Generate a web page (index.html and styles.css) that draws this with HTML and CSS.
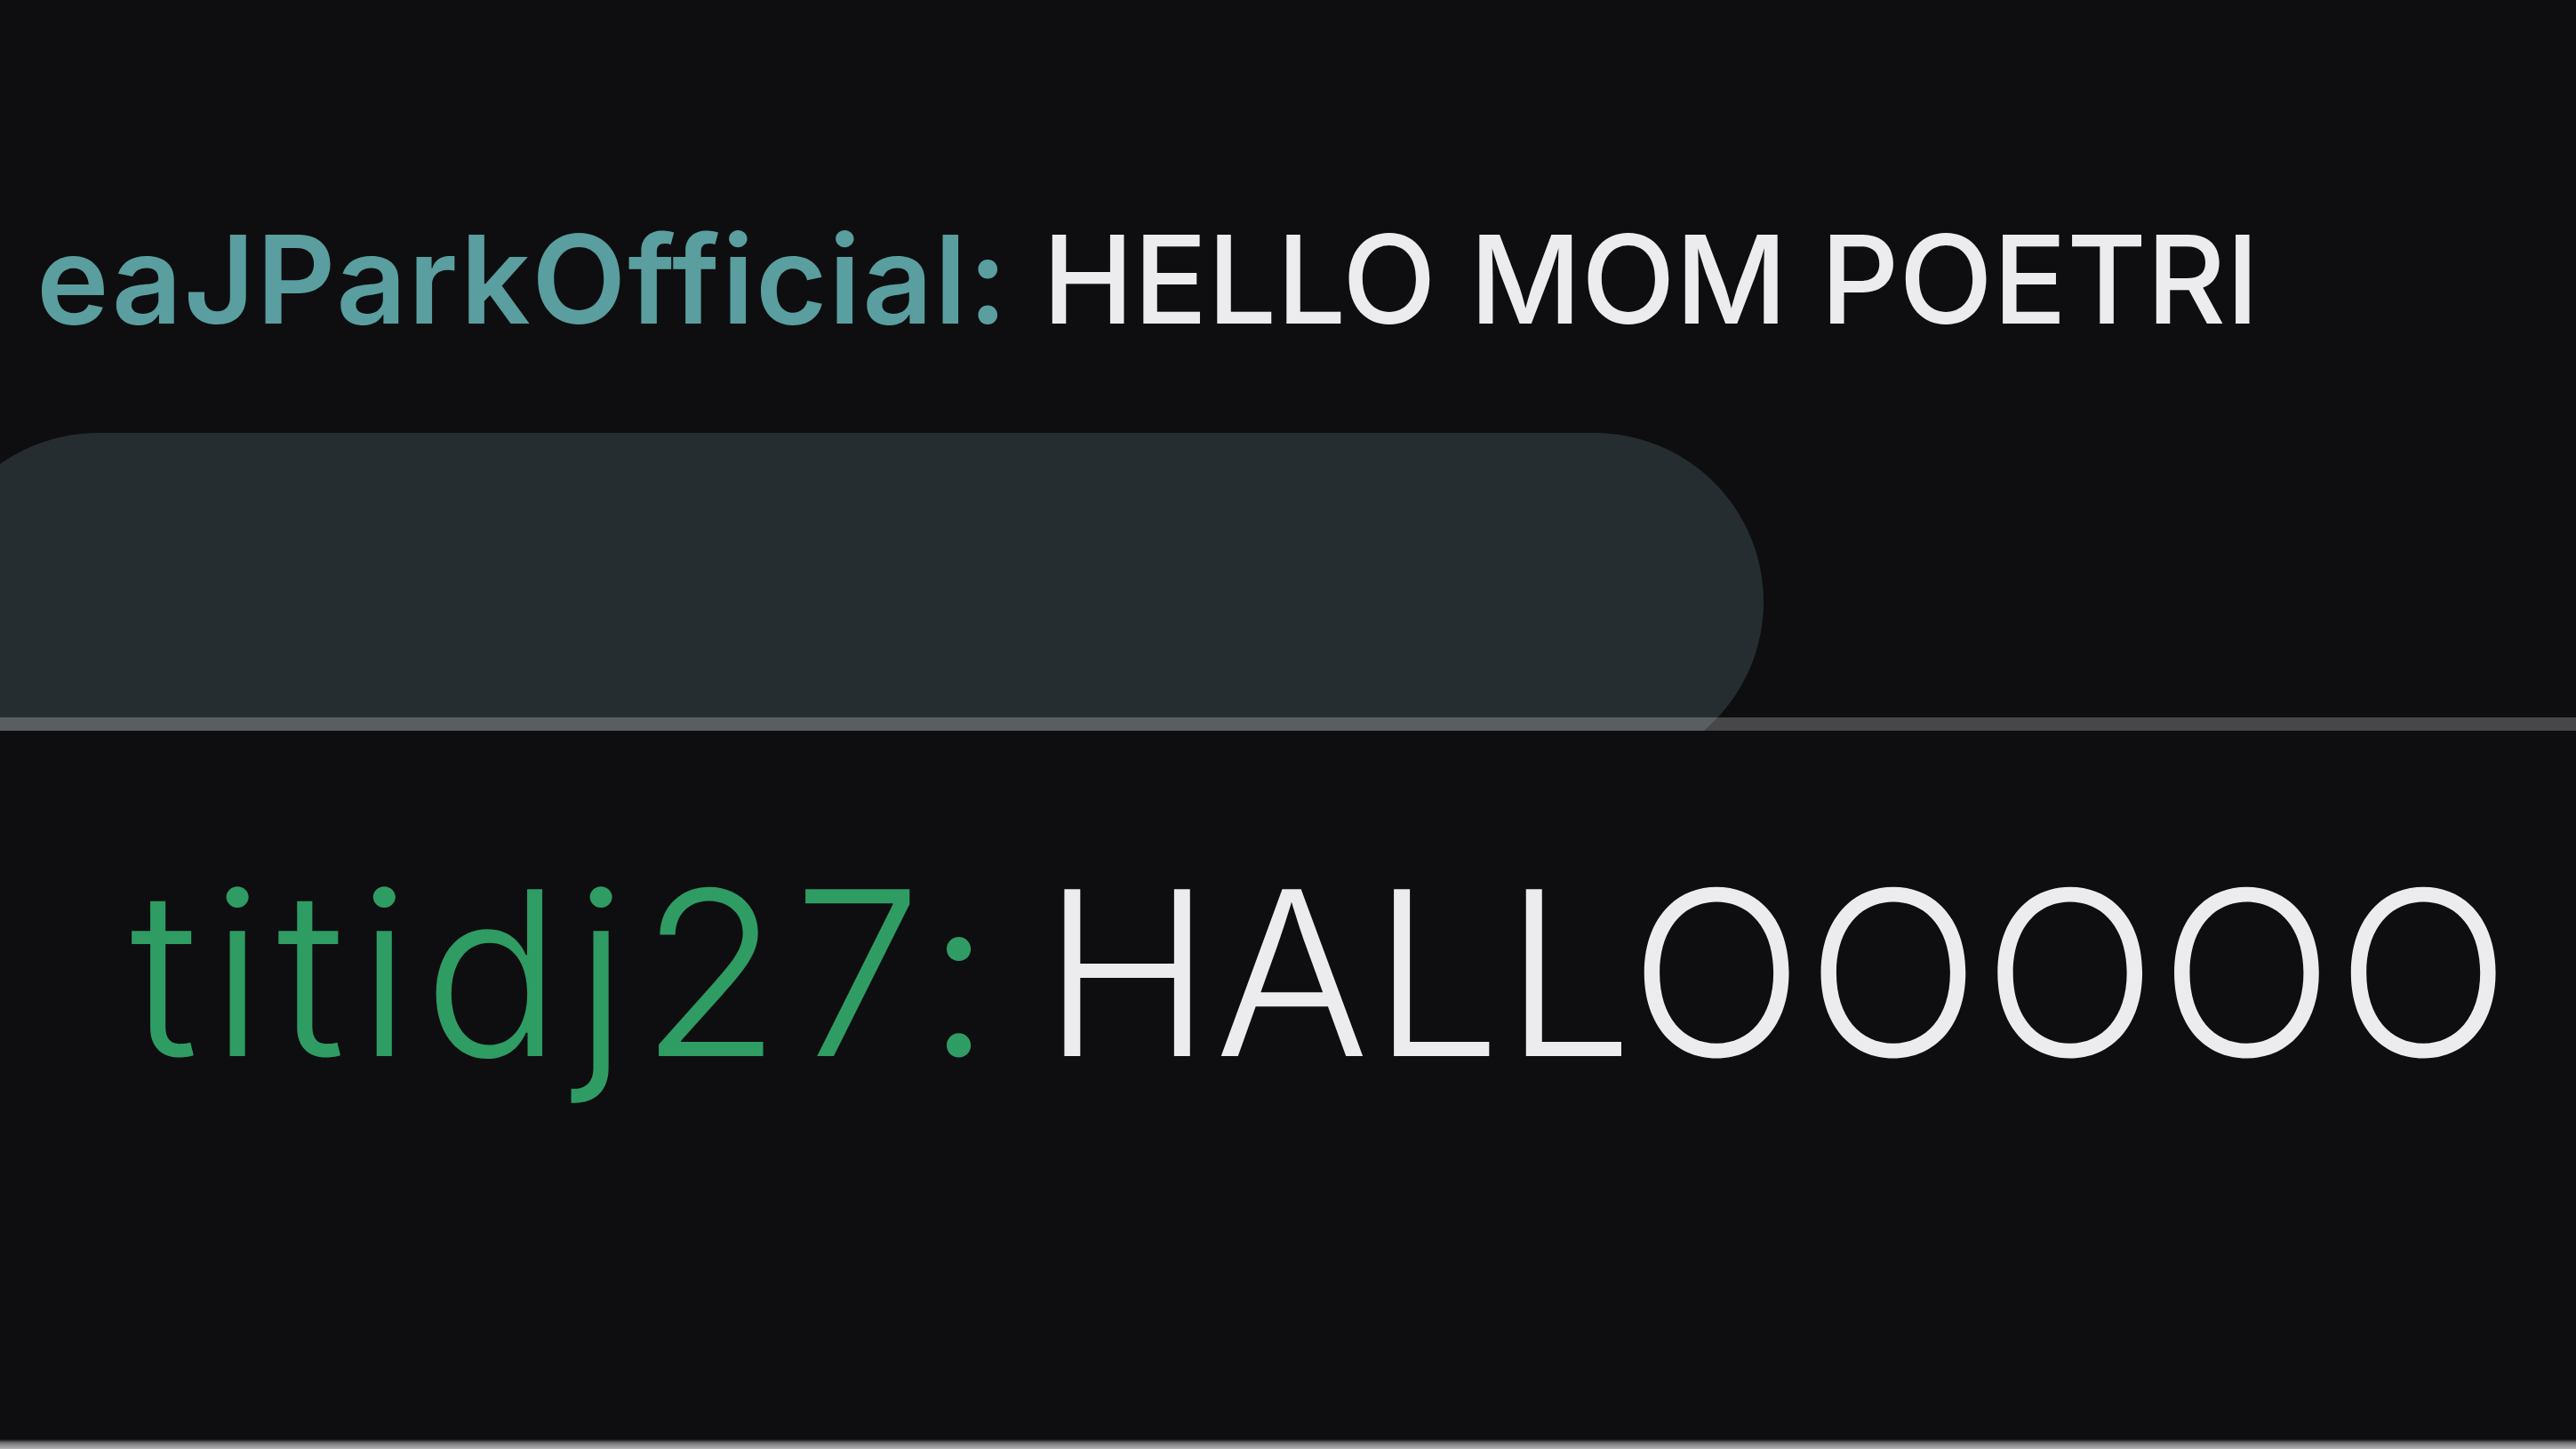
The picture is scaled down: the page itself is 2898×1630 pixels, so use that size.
FILE: index.html
```html
<!DOCTYPE html>
<html lang="en">
<head>
 <meta charset="UTF-8">
 <title>chat</title>
 <link rel="stylesheet" href="styles.css">
</head>
<body>
<div class="chat">
 <section class="panel panel_top">
  <p class="line line_small"><span class="user user_teal">eaJParkOfficial:</span> <span class="msg">HELLO MOM POETRI</span></p>
  <div class="pill"></div>
 </section>
 <section class="panel panel_bottom">
  <p class="line line_big"><span class="user user_green">titidj27:</span> <span class="msg">HALLOOOOO</span></p>
 </section>
</div>
</body>
</html>
```

FILE: styles.css
```css
html, body{
  margin: 0;
  padding: 0;
  background: #0e0e10;
}
body{
  font-family: Inter, "Noto Sans", sans-serif;
  color: #ececee;
  overflow: hidden;
}
.chat{
  width: 2898px;
  height: 1630px;
  display: flex;
  flex-direction: column;
}
.panel{
  position: relative;
  overflow: hidden;
}
.panel_top{
  height: 822px;
  flex: none;
}
/* the grey rule between the two shots, lies over the pill */
.panel_top::after{
  content: "";
  position: absolute;
  left: 0;
  right: 0;
  bottom: 0;
  height: 15px;
  background: rgba(255,255,255,0.24);
}
.panel_bottom{
  flex: 1;
}
.panel_bottom::after{
  content: "";
  position: absolute;
  left: 0;
  right: 0;
  bottom: 0;
  height: 11px;
  background: linear-gradient(#0e0e10, #707072 35%, #b4b4b6);
}
.line{
  margin: 0;
  line-height: 1;
  white-space: nowrap;
}
.line_small{
  font-size: 138px;
  padding: 245px 0 0 41px;
  font-weight: 500;
  word-spacing: 1px;
}
.line_small .user{
  font-weight: 600;
  letter-spacing: 1.8px;
}
.line_small .msg{
  letter-spacing: -0.2px;
}
.line_big{
  font-size: 258px;
  padding: 143px 0 0 146px;
  font-weight: 300;
  word-spacing: -29px;
}
.line_big .user{
  letter-spacing: 14px;
}
.line_big .msg{
  letter-spacing: 3px;
}
.user_teal{
  color: #5a9e9f;
}
.user_green{
  color: #2f9c63;
}
.pill{
  margin: 104px 0 0 -80px;
  width: 2064px;
  height: 380px;
  border-radius: 190px;
  background: #262d30;
}
```
